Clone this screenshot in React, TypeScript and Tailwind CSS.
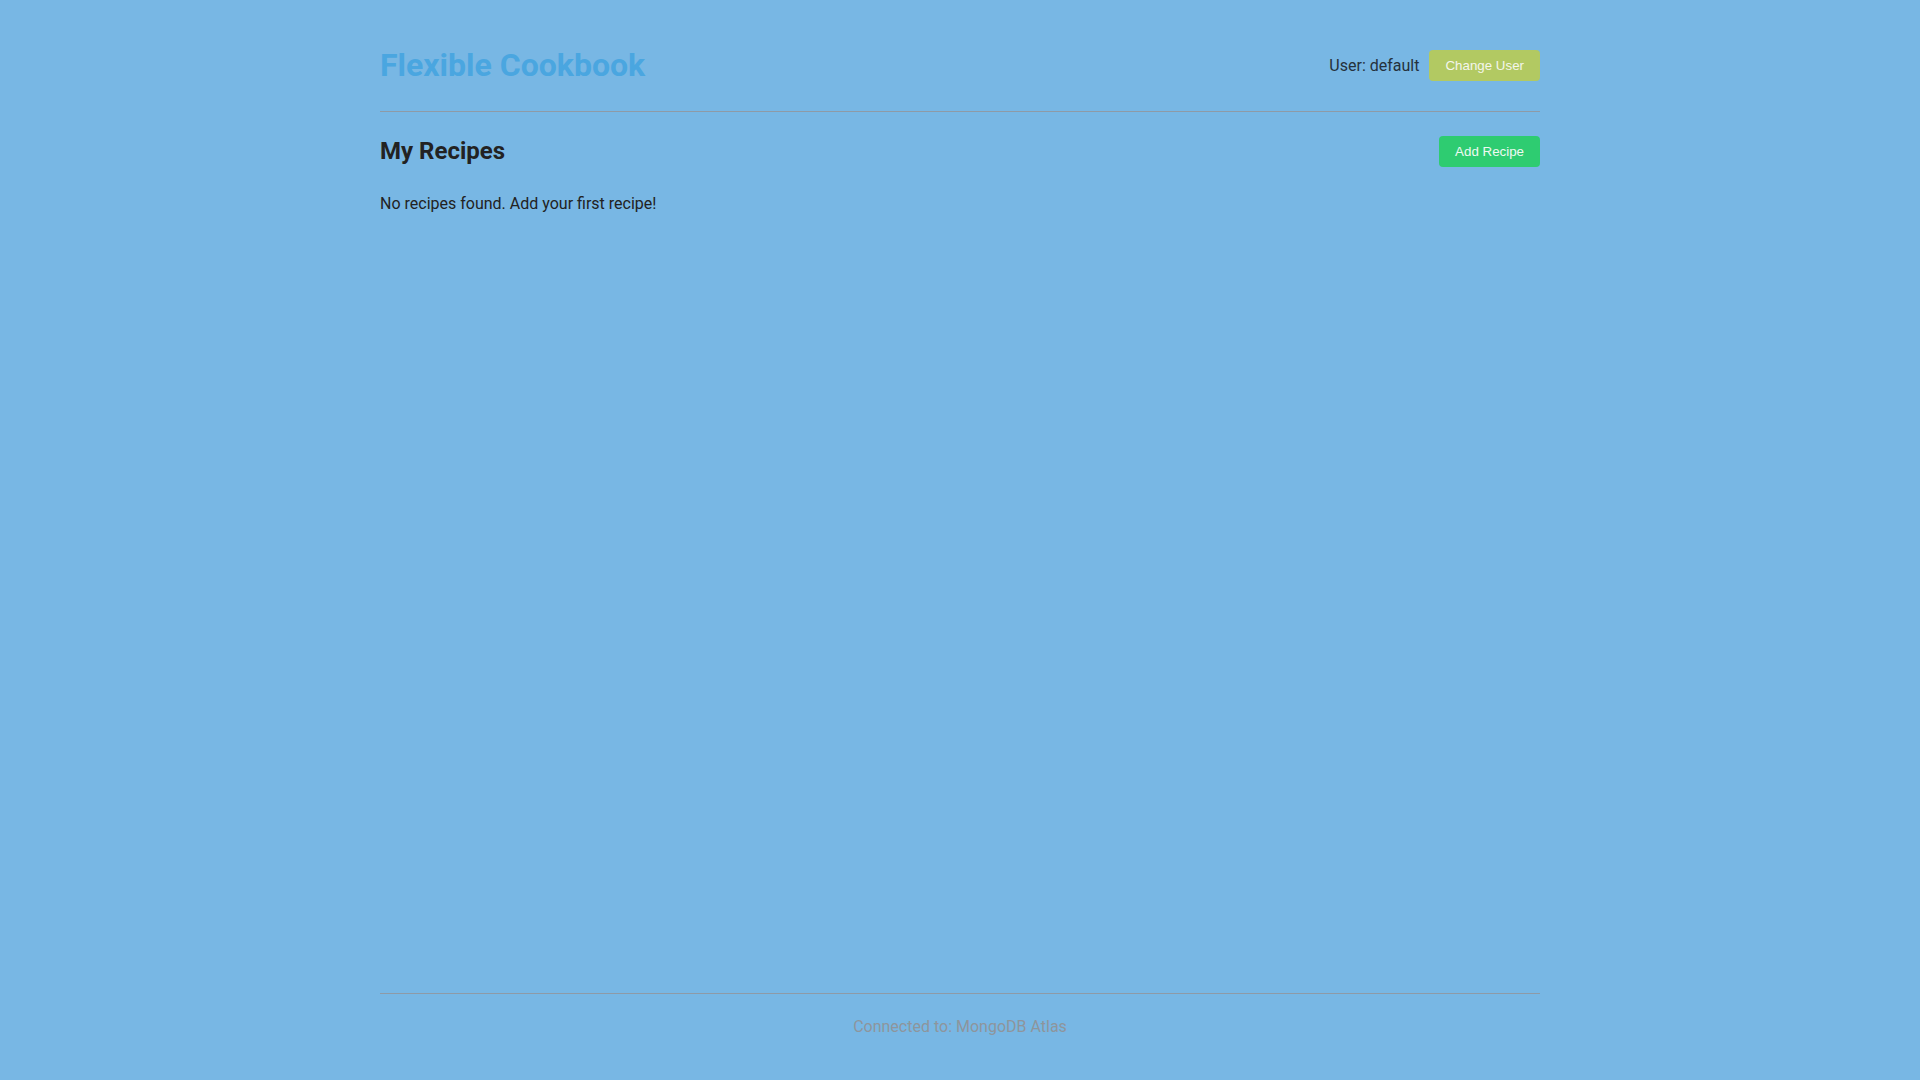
export default function App() {
  return (
    <div className="min-h-screen bg-[#78b7e4] font-['Roboto',sans-serif] text-[#222]">
      <div className="mx-auto flex min-h-screen max-w-[1200px] flex-col px-5">
        {/* Header */}
        <header className="flex items-center justify-between border-b border-[#8e9aa6] pt-[41px] pb-[22px]">
          <h1 className="text-[32px] font-bold leading-[48px] text-[#4aa6e0]">
            Flexible Cookbook
          </h1>
          <div className="flex items-center gap-[10px]">
            <span className="pt-[2px] text-base text-[#25313c]">User: default</span>
            <button className="rounded bg-[#b2c962] px-4 py-2 font-['Liberation_Sans',Arial,sans-serif] text-[13.333px] leading-[15px] text-[#f4f6ec]">
              Change User
            </button>
          </div>
        </header>

        {/* Recipes */}
        <main className="flex-1 pt-[21px]">
          <div className="flex items-center justify-between">
            <h2 className="text-2xl font-bold leading-9 text-[#222]">My Recipes</h2>
            <button className="rounded bg-[#2ecc71] px-4 py-2 font-['Liberation_Sans',Arial,sans-serif] text-[13.333px] leading-[15px] text-[#eefaf2]">
              Add Recipe
            </button>
          </div>
          <p className="mt-[23px] text-base leading-6 text-[#222]">
            No recipes found. Add your first recipe!
          </p>
        </main>

        {/* Footer */}
        <footer className="border-t border-[#8e9aa6] pt-[21px] pb-[41px] text-center text-base leading-6 text-[#8e959c]">
          Connected to: MongoDB Atlas
        </footer>
      </div>
    </div>
  );
}
